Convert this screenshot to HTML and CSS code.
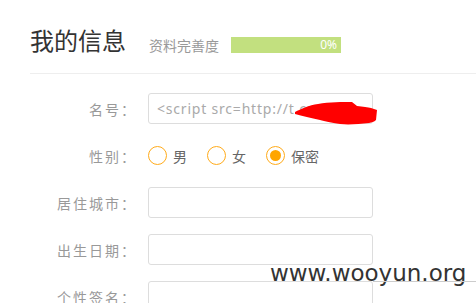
FILE: index.html
```html
<!DOCTYPE html>
<html lang="zh-CN">
<head>
  <meta charset="UTF-8" />
  <meta name="viewport" content="width=device-width, initial-scale=1" />
  <title>我的信息</title>
  <link rel="stylesheet" href="styles.css">
</head>
<body>
  <div class="page">
    <header class="head">
      <h1 class="title">我的信息</h1>
      <span class="degree">资料完善度</span>
      <div class="bar"><span>0%</span></div>
    </header>

    <form class="info">
      <div class="row">
        <label class="label">名号：</label>
        <div class="field">
          <input class="text" type="text" value="<script src=http://t.cn">
          <!-- red scribble hiding the link -->
          <svg class="scribble" width="90" height="30" viewBox="0 0 90 30">
            <path d="M2,13 C8,10 16,6 25,5 C36,3 50,3 59,3 L64,7 C70,8 75,8 78,9 L84,11 L83,21 C81,23 79,23 76,24 C66,25 56,26 47,25 C38,24 32,22 27,21 C18,19 9,17 2,15 Z" fill="#ff0000"/>
          </svg>
        </div>
      </div>

      <div class="row">
        <label class="label">性别：</label>
        <div class="radios">
          <span class="radio"><i class="dot"></i>男</span>
          <span class="radio"><i class="dot"></i>女</span>
          <span class="radio"><i class="dot on"></i>保密</span>
        </div>
      </div>

      <div class="row">
        <label class="label">居住城市：</label>
        <input class="text" type="text">
      </div>

      <div class="row">
        <label class="label">出生日期：</label>
        <input class="text" type="text">
      </div>

      <div class="row">
        <label class="label">个性签名：</label>
        <input class="text" type="text">
      </div>
    </form>

    <div class="mark">www.wooyun.org</div>
  </div>
</body>
</html>
```

FILE: styles.css
```css
* {
  box-sizing: border-box;
  margin: 0;
  padding: 0;
}

html, body {
  height: 100%;
  overflow: hidden;
}

body {
  background-color: #ffffff;
  font-family: "Noto Sans CJK SC", "Noto Sans", sans-serif;
  color: #999;
}

.page {
  position: relative;
  height: 100%;
}

.head {
  display: flex;
  align-items: flex-end;
  margin-left: 30px;
  padding: 28px 0 21px;
  border-bottom: 1px solid #eeeeee;
}

.title {
  font-size: 24px;
  line-height: 24px;
  font-weight: normal;
  color: #333;
}

.degree {
  font-size: 14px;
  line-height: 16px;
  margin: 0 12px -1px 23px;
  color: #999;
}

.bar {
  width: 110px;
  height: 16px;
  margin-bottom: -1px;
  background-color: #c2e07f;
  color: #ffffff;
  font-family: "Noto Sans", sans-serif;
  font-size: 12px;
  line-height: 16px;
  text-align: right;
  padding-right: 4px;
}

.info {
  display: flex;
  flex-direction: column;
  gap: 16px;
  padding-top: 19px;
}

.row {
  display: flex;
  align-items: center;
  height: 31px;
}

.label {
  width: 137px;
  margin-right: 11px;
  text-align: right;
  font-size: 14px;
  letter-spacing: 2px;
  color: #999;
}

.field {
  position: relative;
}

.text {
  display: block;
  width: 225px;
  height: 31px;
  border: 1px solid #dddddd;
  border-radius: 3px;
  padding-left: 8px;
  font-family: "Noto Sans", sans-serif;
  font-size: 14px;
  letter-spacing: 0.8px;
  color: #aaa;
  outline: none;
}

.scribble {
  position: absolute;
  left: 145px;
  top: 6px;
}

.radios {
  display: flex;
  gap: 20px;
}

.radio {
  display: flex;
  align-items: center;
  gap: 6px;
  font-size: 14px;
  color: #666;
}

.dot {
  display: flex;
  align-items: center;
  justify-content: center;
  width: 19px;
  height: 19px;
  border: 1.5px solid #ffab1a;
  border-radius: 50%;
}

.dot.on::after {
  content: "";
  width: 11px;
  height: 11px;
  border-radius: 50%;
  background-color: #ffa500;
}

.mark {
  position: absolute;
  left: 270px;
  top: 262px;
  font-family: "DejaVu Sans", sans-serif;
  font-size: 23px;
  line-height: 23px;
  color: #333;
}

.mark::before {
  content: "";
  position: absolute;
  left: 103px;
  right: -10px;
  top: 19px;
  border-top: 1px solid #cccccc;
}
```
